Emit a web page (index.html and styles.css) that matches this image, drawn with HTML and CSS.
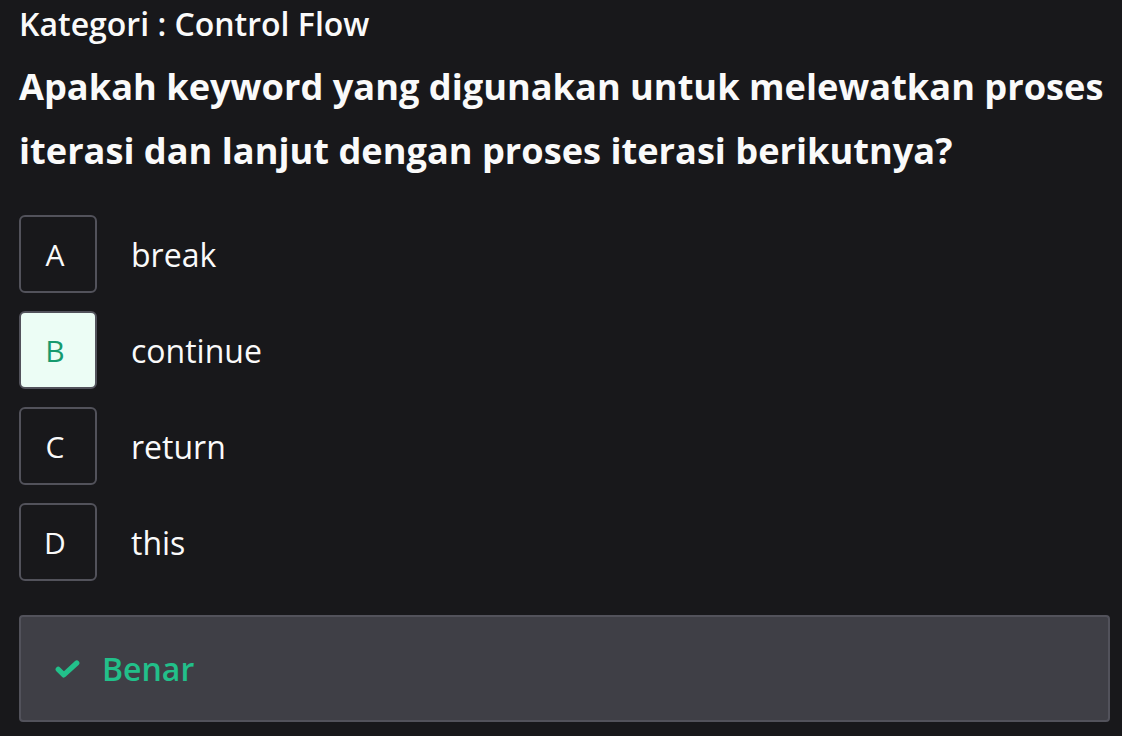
FILE: index.html
```html
<!DOCTYPE html>
<html lang="id">
<head>
<meta charset="utf-8">
<link rel="stylesheet" href="styles.css">
</head>
<body>
<main class="quiz">
  <div class="category">Kategori : Control Flow</div>
  <h1 class="question">Apakah keyword yang digunakan untuk melewatkan proses iterasi dan lanjut dengan proses iterasi berikutnya?</h1>
  <ul class="options">
    <li class="option"><span class="letter">A</span><span class="label">break</span></li>
    <li class="option selected"><span class="letter">B</span><span class="label">continue</span></li>
    <li class="option"><span class="letter">C</span><span class="label">return</span></li>
    <li class="option"><span class="letter">D</span><span class="label">this</span></li>
  </ul>
  <div class="feedback">
    <svg class="check" viewBox="0 0 25 18" width="25" height="18" aria-hidden="true"><path d="M3.2 9.3l5.6 5.6L21.8 3" fill="none" stroke="currentColor" stroke-width="5.2" stroke-linecap="round" stroke-linejoin="round"/></svg>
    <span class="feedback-text">Benar</span>
  </div>
</main>
</body>
</html>
```
FILE: styles.css
```css
html, body {
  margin: 0;
  background: #18181b;
}
body {
  font-family: "Open Sans", "Noto Sans", sans-serif;
  color: #fafafa;
}
.quiz {
  padding: 4px 12px 0 19px;
  display: flex;
  flex-direction: column;
}
.category {
  font-size: 32px;
  font-weight: 600;
  line-height: 40px;
}
.question {
  margin: 10px 0 0;
  font-size: 36.2px;
  font-weight: 700;
  line-height: 64px;
}
.options {
  list-style: none;
  margin: 33px 0 0;
  padding: 0;
  display: flex;
  flex-direction: column;
  gap: 18px;
}
.option {
  display: flex;
  align-items: center;
  gap: 34px;
}
.letter {
  box-sizing: border-box;
  width: 78px;
  height: 78px;
  padding-right: 6px;
  border: 2px solid #52525b;
  border-radius: 6px;
  display: flex;
  align-items: center;
  justify-content: center;
  font-size: 30px;
  color: #fafafa;
}
.selected .letter {
  background: #ecfdf5;
  color: #169a6e;
}
.label {
  font-size: 32px;
}
.feedback {
  margin-top: 34px;
  box-sizing: border-box;
  height: 107px;
  background: #3f3f46;
  border: 2px solid #52525b;
  border-radius: 4px;
  display: flex;
  align-items: center;
  gap: 22px;
  padding-left: 34px;
  color: #22c08a;
}
.feedback-text {
  font-size: 32px;
  font-weight: 600;
}
```
